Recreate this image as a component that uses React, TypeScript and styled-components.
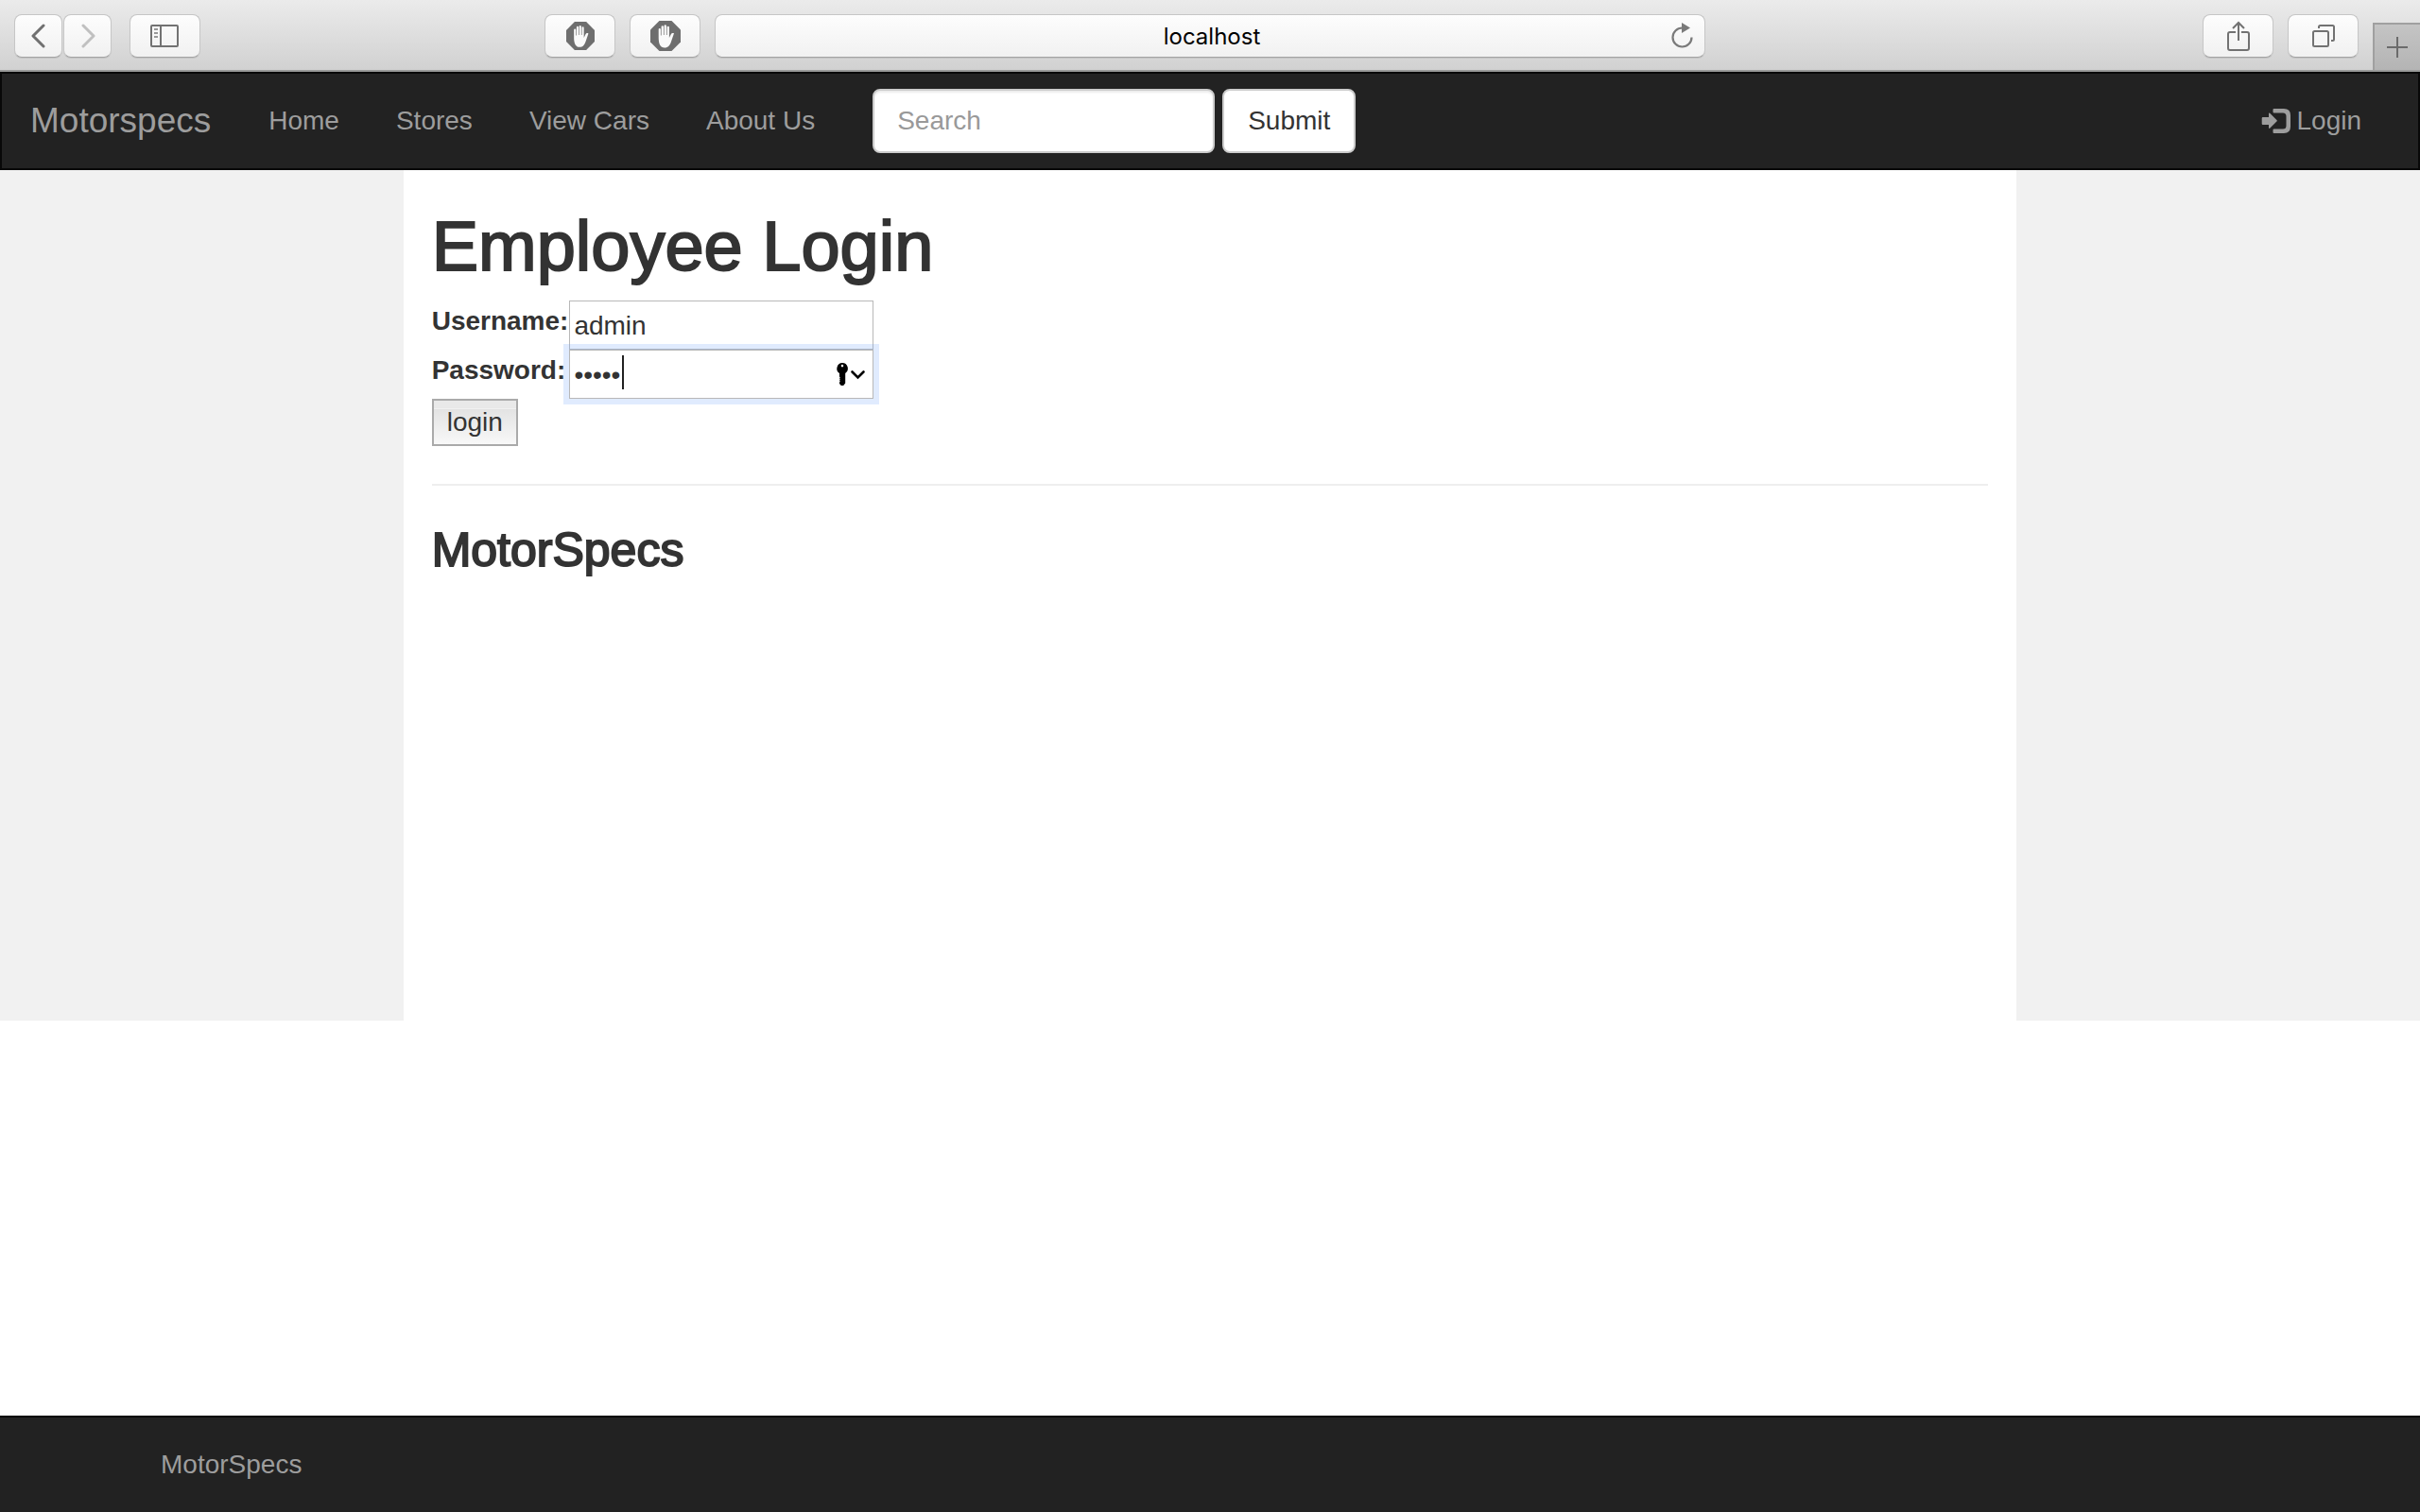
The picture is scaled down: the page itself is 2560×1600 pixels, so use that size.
import React from "react";
import styled, { createGlobalStyle, css } from "styled-components";

const GlobalStyle = createGlobalStyle`
  *, *::before, *::after { box-sizing: border-box; }
  body {
    margin: 0;
    background: #fff;
    color: #333;
    font-family: "Liberation Sans", Arial, sans-serif;
    font-size: 28px;
    line-height: 40px;
  }
  input, button { font: inherit; color: inherit; margin: 0; }
`;

const Page = styled.div`
  display: flex;
  flex-direction: column;
  min-height: 100vh;
`;

/* Browser chrome */

const Toolbar = styled.div`
  display: grid;
  grid-template-columns: 1fr minmax(0, 1048px) 1fr;
  column-gap: 15px;
  height: 76px;
  background: linear-gradient(#ebebeb, #d1d1d1);
  border-bottom: 2px solid #9a9b9a;
`;

const ToolGroup = styled.div<{ $gap: number }>`
  display: flex;
  gap: ${(p) => p.$gap}px;
`;

const LeftTools = styled.div`
  display: flex;
  justify-content: space-between;
  padding: 15px 0 0 15px;
`;

const RightTools = styled.div`
  display: flex;
  justify-content: flex-end;
  gap: 15px;
  padding-top: 15px;
`;

const chromeSurface = css`
  height: 46px;
  border: 1px solid #c6c6c6;
  border-bottom-color: #a3a3a3;
  border-radius: 8px;
  background: linear-gradient(#fdfdfd, #f1f1f1);
  box-shadow: 0 1px 0 rgba(0, 0, 0, 0.08);
`;

const ToolButton = styled.button<{ $narrow?: boolean }>`
  ${chromeSurface}
  display: flex;
  align-items: center;
  justify-content: center;
  width: ${(p) => (p.$narrow ? 51 : 75)}px;
  padding: 0;
`;

const AddressBar = styled.div`
  ${chromeSurface}
  display: flex;
  align-items: center;
  margin-top: 15px;
  padding-right: 12px;
`;

const Address = styled.input`
  flex: 1;
  min-width: 0;
  padding: 2px 0 0 40px;
  border: 0;
  outline: 0;
  background: none;
  color: #000;
  font-family: Inter, Roboto, sans-serif;
  font-size: 24px;
  line-height: 40px;
  text-align: center;
`;

const ReloadButton = styled.button`
  display: flex;
  padding: 0;
  border: 0;
  background: none;
`;

const NewTab = styled.button`
  display: flex;
  align-items: center;
  justify-content: center;
  width: 50px;
  height: 50px;
  margin-top: 9px;
  padding: 0;
  border: 0 solid #a0a0a0;
  border-width: 2px 0 0 2px;
  background: linear-gradient(#c4c4c4, #b4b4b4);
`;

/* Site navigation */

const Navbar = styled.nav`
  display: flex;
  align-items: center;
  height: 104px;
  padding: 0 60px 0 30px;
  border: 2px solid #080808;
  background: #222;
  color: #9d9d9d;
`;

const Brand = styled.a`
  color: inherit;
  font-size: 37px;
  text-decoration: none;
`;

const NavLinks = styled.div`
  display: flex;
  gap: 60px;
  margin-left: 61px;
`;

const NavLink = styled.a`
  display: flex;
  align-items: center;
  gap: 5px;
  color: inherit;
  text-decoration: none;
`;

const SearchForm = styled.form`
  display: flex;
  gap: 8px;
  margin: 0 auto 0 61px;
`;

const SearchInput = styled.input`
  width: 362px;
  height: 68px;
  padding: 0 24px;
  border: 2px solid #ccc;
  border-radius: 8px;
  background: #fff;
  box-shadow: inset 0 2px 2px rgba(0, 0, 0, 0.075);
  color: #555;
  outline: 0;
  &::placeholder { color: #999; opacity: 1; }
`;

const SubmitButton = styled.button`
  height: 68px;
  padding: 0 25px;
  border: 2px solid #ccc;
  border-radius: 8px;
  background: #fff;
  color: #333;
`;

/* Page body */

const Columns = styled.div`
  display: grid;
  grid-template-columns: 1fr 4fr 1fr;
  min-height: 900px;
`;

const Side = styled.aside`
  background: #f1f1f1;
`;

const Main = styled.main`
  padding: 40px 30px;
`;

const Title = styled.h1`
  margin: 0 0 16px;
  font-size: 74px;
  font-weight: 400;
  line-height: 82px;
  -webkit-text-stroke: 2px #333;
`;

const Subtitle = styled.h2`
  margin: 40px 0 0;
  font-size: 50px;
  font-weight: 400;
  line-height: 56px;
  -webkit-text-stroke: 2px #333;
`;

const LoginForm = styled.form`
  display: grid;
  grid-template-columns: max-content 322px;
  column-gap: 1px;
  grid-auto-rows: 52px;
`;

const Label = styled.label`
  padding-top: 2px;
  font-weight: 700;
`;

const Field = styled.div`
  position: relative;
  display: flex;
`;

const TextInput = styled.input<{ $active?: boolean }>`
  width: 100%;
  padding: 2px 4px 0;
  border: 1px solid #b8b8b8;
  border-radius: 0;
  background: #fff;
  outline: 0;
  ${(p) => p.$active && css`box-shadow: 0 0 0 6px rgba(120, 168, 250, 0.23);`}
`;

const Caret = styled.span`
  position: absolute;
  top: 6px;
  left: 56px;
  width: 2px;
  height: 36px;
  background: #222;
`;

const KeyButton = styled.button`
  position: absolute;
  top: 13px;
  right: 8px;
  display: flex;
  padding: 0;
  border: 0;
  background: none;
`;

const LoginButton = styled.button`
  justify-self: start;
  height: 50px;
  padding: 0 14px;
  border: 2px solid #aaa;
  background: linear-gradient(#e9e9e9 0, #e9e9e9 8px, #f1f1f1 8px, #f1f1f1 9px, #e3e3e3 9px, #f8f8f8 100%);
  line-height: 44px;
`;

const Rule = styled.hr`
  margin: 38px 0 0;
  border: 0;
  border-top: 2px solid #eee;
`;

const Footer = styled.footer`
  margin-top: auto;
  padding: 30px 0;
  border-top: 2px solid #080808;
  background: #222;
  color: #9d9d9d;
`;

const FooterInner = styled.div`
  max-width: 2340px;
  margin: 0 auto;
  padding: 0 60px;
`;

/* Icons */

const Chevron = ({ forward }: { forward?: boolean }) => (
  <svg width="16" height="26" viewBox="0 0 16 26" fill="none" stroke={forward ? "#c0c0c0" : "#707070"} strokeWidth="3" strokeLinecap="round" strokeLinejoin="round">
    <path d={forward ? "M3 2l11 11L3 24" : "M13 2L2 13l11 11"} />
  </svg>
);

const SidebarIcon = () => (
  <svg width="31" height="24" viewBox="0 0 31 24" fill="none" stroke="#727272" strokeWidth="2">
    <rect x="1" y="1" width="28" height="22" rx="1" />
    <path d="M11 1v22" />
    <path d="M4 5h4M4 9h4M4 13h4" stroke="#999" />
  </svg>
);

const HandIcon = ({ size }: { size: number }) => (
  <svg width={size} height={size} viewBox="0 0 32 32">
    <path d="M9.5 0h13L32 9.500v13L22.500 32h-13L0 22.500v-13z" fill="#6e6e6e" />
    <path d="M8.700 18V9a1.100 1.100 0 0 1 2.200 0v6.500h.7V6.300a1.150 1.150 0 0 1 2.300 0V15h.7V5.300a1.150 1.150 0 0 1 2.300 0V15h.7V6.800a1.150 1.150 0 0 1 2.300 0V18l1.900-3.800c.7-1.400 1.800-1.600 3.200-.9l-3 8.700C20.700 26 18.800 28.500 15 28.500c-4.300 0-6.300-4-6.300-10.500z" fill="#fafafa" />
  </svg>
);

const ReloadIcon = () => (
  <svg width="24" height="28" viewBox="0 0 24 28" fill="none">
    <path d="M12.500 5.500A10 10 0 1 0 22.500 15.500" stroke="#7a7a7a" strokeWidth="2.200" />
    <path d="M12 0l9 5.500-9 5.500z" fill="#7a7a7a" />
  </svg>
);

const ShareIcon = () => (
  <svg width="24" height="32" viewBox="0 0 24 32" fill="none" stroke="#727272" strokeWidth="2">
    <path d="M9 12H3q-2 0-2 2v15q0 2 2 2h18q2 0 2-2V14q0-2-2-2h-6" />
    <path d="M12 21V2M6 8l6-6 6 6" />
  </svg>
);

const TabsIcon = () => (
  <svg width="24" height="24" viewBox="0 0 24 24" fill="none" stroke="#727272" strokeWidth="2">
    <rect x="1" y="7" width="16" height="16" rx="1.500" />
    <path d="M7 4V2.500Q7 1 8.500 1h13Q23 1 23 2.500V15.500Q23 17 21.500 17H20" />
  </svg>
);

const PlusIcon = () => (
  <svg width="22" height="22" viewBox="0 0 22 22" stroke="#6b6b6b" strokeWidth="2">
    <path d="M11 0v22M0 11h22" />
  </svg>
);

const LogInIcon = () => (
  <svg width="32" height="28" viewBox="0 0 32 28" fill="#9d9d9d">
    <path d="M2 10h6V6.500c0-1 .7-1.200 1.400-.5l7 7c.6.600.6 1 0 1.600l-7 7c-.7.700-1.400.4-1.400-.6V18H2c-.8 0-1.300-.5-1.300-1.300v-5.400C.7 10.500 1.200 10 2 10z" />
    <path d="M13.500 1H24q7 0 7 7v12q0 7-7 7H13.500q-1 0-1-1v-2.500q0-1 1-1H23q3.500 0 3.500-3.500V9q0-3.500-3.500-3.500h-9.500q-1 0-1-1V2q0-1 1-1z" />
  </svg>
);

const KeyIcon = () => (
  <svg width="32" height="26" viewBox="0 0 32 26">
    <path fillRule="evenodd" d="M7 1a6 6 0 0 1 3.200 11V22.500L8.200 25H5.800L4 23v-1.500l.8-.8-.8-1 .8-1-.8-1 .8-1L4 15.500V12A6 6 0 0 1 7 1zm0 1.800a1.300 1.300 0 1 0 0 2.600 1.300 1.300 0 0 0 0-2.600z" fill="#000" />
    <path d="M17.500 10.500l6 6 6-6" fill="none" stroke="#000" strokeWidth="2.600" strokeLinecap="round" />
  </svg>
);

const links = ["Home", "Stores", "View Cars", "About Us"];

export default function App() {
  const stay = (e: React.FormEvent) => e.preventDefault();
  return (
    <Page>
      <GlobalStyle />
      <Toolbar>
        <LeftTools>
          <ToolGroup $gap={19}>
            <ToolGroup $gap={1}>
              <ToolButton $narrow aria-label="Back"><Chevron /></ToolButton>
              <ToolButton $narrow aria-label="Forward"><Chevron forward /></ToolButton>
            </ToolGroup>
            <ToolButton aria-label="Show sidebar"><SidebarIcon /></ToolButton>
          </ToolGroup>
          <ToolGroup $gap={15}>
            <ToolButton aria-label="Block ads"><HandIcon size={30} /></ToolButton>
            <ToolButton aria-label="Block content"><HandIcon size={32} /></ToolButton>
          </ToolGroup>
        </LeftTools>
        <AddressBar>
          <Address aria-label="Address" defaultValue="localhost" />
          <ReloadButton aria-label="Reload"><ReloadIcon /></ReloadButton>
        </AddressBar>
        <RightTools>
          <ToolButton aria-label="Share"><ShareIcon /></ToolButton>
          <ToolButton aria-label="Show all tabs"><TabsIcon /></ToolButton>
          <NewTab aria-label="New tab"><PlusIcon /></NewTab>
        </RightTools>
      </Toolbar>

      <Navbar>
        <Brand href="#">Motorspecs</Brand>
        <NavLinks>
          {links.map((text) => (
            <NavLink key={text} href="#">{text}</NavLink>
          ))}
        </NavLinks>
        <SearchForm onSubmit={stay}>
          <SearchInput type="text" aria-label="Search" placeholder="Search" />
          <SubmitButton type="submit">Submit</SubmitButton>
        </SearchForm>
        <NavLink href="#"><LogInIcon />Login</NavLink>
      </Navbar>

      <Columns>
        <Side />
        <Main>
          <Title>Employee Login</Title>
          <LoginForm onSubmit={stay}>
            <Label htmlFor="username">Username:</Label>
            <Field>
              <TextInput id="username" type="text" defaultValue="admin" />
            </Field>
            <Label htmlFor="password">Password:</Label>
            <Field>
              <TextInput id="password" type="password" defaultValue="admin" $active />
              <Caret />
              <KeyButton type="button" aria-label="Saved passwords"><KeyIcon /></KeyButton>
            </Field>
            <LoginButton type="submit">login</LoginButton>
          </LoginForm>
          <Rule />
          <Subtitle>MotorSpecs</Subtitle>
        </Main>
        <Side />
      </Columns>

      <Footer>
        <FooterInner>MotorSpecs</FooterInner>
      </Footer>
    </Page>
  );
}
